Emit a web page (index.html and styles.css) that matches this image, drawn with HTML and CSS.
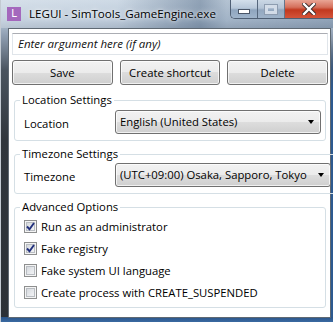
FILE: index.html
```html
<!DOCTYPE html>
<html lang="en">
<head>
<meta charset="UTF-8">
<title>LEGUI - SimTools_GameEngine.exe</title>
<link rel="stylesheet" href="styles.css">
</head>
<body>
<div class="window">

  <div class="titlebar">
    <span class="app-icon">L</span>
    <span class="title">LEGUI - SimTools_GameEngine.exe</span>
    <div class="caption">
      <span class="cap-btn cap-min"><i class="min-bar"></i></span>
      <span class="cap-btn cap-max"><i class="max-box"></i></span>
      <span class="cap-btn cap-close">
        <svg width="14" height="12" viewBox="0 0 14 12">
          <path d="M2 1 L12 11 M12 1 L2 11" stroke="#3a2a2a" stroke-width="4.2" stroke-linecap="square"/>
          <path d="M2 1 L12 11 M12 1 L2 11" stroke="#fff" stroke-width="2.4" stroke-linecap="square"/>
        </svg>
      </span>
    </div>
  </div>

  <div class="client">
    <div class="arg">Enter argument here (if any)</div>

    <div class="actions">
      <button class="btn">Save</button>
      <button class="btn">Create shortcut</button>
      <button class="btn">Delete</button>
    </div>

    <fieldset class="group">
      <legend>Location Settings</legend>
      <div class="row">
        <span class="row-label">Location</span>
        <div class="combo"><span class="combo-text">English (United States)</span><span class="arrow"></span></div>
      </div>
    </fieldset>

    <fieldset class="group">
      <legend>Timezone Settings</legend>
      <div class="row tz">
        <span class="row-label">Timezone</span>
        <div class="combo"><span class="combo-text">(UTC+09:00) Osaka, Sapporo, Tokyo</span><span class="arrow"></span></div>
      </div>
    </fieldset>

    <fieldset class="group options">
      <legend>Advanced Options</legend>
      <label class="check"><span class="box checked"><svg width="9" height="9" viewBox="0 0 9 9"><path d="M1 4.5 L3.5 7.2 L8 1" fill="none" stroke="#22307c" stroke-width="1.9"/></svg></span>Run as an administrator</label>
      <label class="check"><span class="box checked"><svg width="9" height="9" viewBox="0 0 9 9"><path d="M1 4.5 L3.5 7.2 L8 1" fill="none" stroke="#22307c" stroke-width="1.9"/></svg></span>Fake registry</label>
      <label class="check"><span class="box"></span>Fake system UI language</label>
      <label class="check"><span class="box"></span>Create process with CREATE_SUSPENDED</label>
    </fieldset>
  </div>

</div>
</body>
</html>
```

FILE: styles.css
```css
/* window frame (Aero style) */

* { box-sizing: border-box; }

html, body {
  margin: 0;
}

body {
  width: 333px;
  height: 322px;
  overflow: hidden;
  font-family: "Open Sans", "Noto Sans", sans-serif;
  font-size: 11.3px;
  color: #000;
}

.window {
  width: 333px;
  height: 322px;
  display: flex;
  flex-direction: column;
  border-left: 1px solid #c3cad2;
  background:
    linear-gradient(#2a5488, #3a6aa2) bottom / 100% 5px no-repeat,
    linear-gradient(to bottom, rgba(40,80,130,0) 40px, #2d5a90 90px) right / 3px 100% no-repeat,
    linear-gradient(to bottom, #c9d6e3 0, #b4c4d5 20px, #8e9db0 36px, #4a545f 70px, #30363d 140px, #2c3137 100%);
}

.titlebar {
  height: 28px;
  display: flex;
  align-items: flex-start;
  padding-left: 6px;
  background: linear-gradient(to right, rgba(255,255,255,.25) 0, rgba(255,255,255,.1) 35%, rgba(60,85,115,.4) 60%, rgba(60,85,115,.15) 68%, rgba(60,85,115,.3) 100%);
}

.app-icon {
  flex: none;
  width: 14px;
  height: 14px;
  margin-top: 7px;
  background: #a468bd;
  color: #fff;
  font-size: 10px;
  line-height: 14px;
  text-align: center;
  font-family: "DejaVu Sans", sans-serif;
}

.title {
  flex: none;
  margin: 5px 0 0 8px;
  font-size: 11.6px;
  line-height: 18px;
  color: #000;
  text-shadow: 0 0 6px rgba(255,255,255,.9), 0 0 3px rgba(255,255,255,.8);
  white-space: nowrap;
}

.caption {
  flex: none;
  margin-left: auto;
  display: flex;
  height: 19px;
  border: 1px solid #4f5f74;
  border-top: none;
  border-right: none;
  border-radius: 0 0 0 5px;
  overflow: hidden;
}

.cap-btn {
  display: flex;
  align-items: center;
  justify-content: center;
  border-right: 1px solid #55667c;
}

.cap-min, .cap-max {
  width: 27px;
  background: linear-gradient(to bottom, #d3dfeb 0, #b7c7d9 45%, #8fa5be 55%, #9fb4cb 100%);
}

.cap-max {
  opacity: .8;
}

.cap-close {
  width: 48px;
  border-right: none;
  background: linear-gradient(to bottom, #e9a595 0, #d5705c 40%, #c2391f 55%, #d4543a 100%);
}

.min-bar {
  width: 12px;
  height: 5px;
  margin-top: 4px;
  background: #fff;
  border: 1px solid #4a5668;
}

.max-box {
  width: 12px;
  height: 9px;
  border: 3px solid #dfe7f0;
  outline: 1px solid #8797ab;
}

/* client area */

.client {
  flex: 1;
  margin: 0 2px 4px 7px;
  border: 1px solid #5f6973;
  background: #fff;
  padding: 4px 2px 0 3px;
}

.arg {
  height: 22px;
  border: 1px solid #e0e5ea;
  border-top-color: #abadb3;
  padding-left: 5px;
  font-style: italic;
  font-size: 11.5px;
  line-height: 20px;
  color: #111;
}

.actions {
  display: grid;
  grid-template-columns: repeat(3, 1fr);
  gap: 7px;
  margin-top: 5px;
}

.btn {
  height: 25px;
  padding: 0;
  font: inherit;
  color: #000;
  border: 1px solid #707070;
  border-radius: 3px;
  background: linear-gradient(to bottom, #f2f2f2 0, #ebebeb 50%, #dddddd 50%, #cfcfcf 100%);
  box-shadow: inset 0 0 0 1px rgba(255,255,255,.7);
}

.group {
  margin: 7px 2px 0;
  padding: 0 4px 6px 9px;
  border: 1px solid #d5dfe5;
  border-radius: 3px;
}

.group + .group {
  margin-top: 5px;
}

.group legend {
  margin-left: -4px;
  padding: 0 2px;
  line-height: 16px;
}

.row {
  display: flex;
  align-items: center;
  margin-top: 2px;
}

.row.tz {
  margin-top: 1px;
}

.row-label {
  width: 91px;
  flex: none;
  padding-top: 2px;
}

.combo {
  flex: 1;
  min-width: 0;
  height: 24px;
  display: flex;
  align-items: center;
  border: 1px solid #707070;
  border-radius: 3px;
  background: linear-gradient(to bottom, #f2f2f2 0, #ebebeb 50%, #dddddd 50%, #cfcfcf 100%);
  box-shadow: inset 0 0 0 1px rgba(255,255,255,.7);
  padding-left: 4px;
}

.combo-text {
  flex: 1;
  min-width: 0;
  overflow: hidden;
  white-space: nowrap;
  margin-top: -2px;
}

.arrow {
  flex: none;
  width: 23px;
  height: 10px;
  display: flex;
  justify-content: flex-end;
  padding-right: 6px;
  align-items: center;
}

.arrow::before {
  content: "";
  border-left: 3.5px solid transparent;
  border-right: 3.5px solid transparent;
  border-top: 4px solid #000;
}

.options {
  padding-bottom: 4px;
}

.check {
  display: flex;
  align-items: center;
  height: 21px;
  margin-top: 1px;
}

.box {
  flex: none;
  width: 13px;
  height: 13px;
  margin-right: 4px;
  border: 1px solid #8e8f8f;
  background: linear-gradient(135deg, #cdd1d6 0, #e9ebee 60%, #f7f7f7 100%);
  box-shadow: inset 0 0 0 1px #f4f4f4, inset 0 0 0 2px #b9bdc2;
  display: flex;
  align-items: center;
  justify-content: center;
}
```
